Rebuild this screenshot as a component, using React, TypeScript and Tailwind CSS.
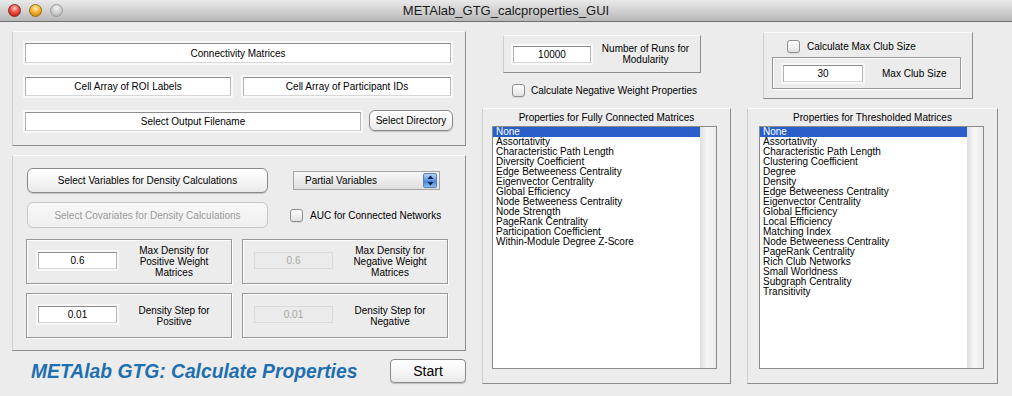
import React from "react";

const FONT = "font-['Liberation_Sans',Arial,Helvetica,sans-serif]";

const outerPanel =
  "border border-t-[#fafafa] border-l-[#cfcfcf] border-r-[#8c8c8c] border-b-[#8c8c8c]";
const subPanel =
  "border border-[#979797] shadow-[1px_1px_0_#ffffff,inset_1px_1px_0_#ffffff]";
const field =
  "bg-white border border-t-[#8e8e8e] border-l-[#b2b2b2] border-r-[#b8b8b8] border-b-[#d6d6d6] shadow-[0_0_0_2px_#f8f8f8]";
const disabledField =
  "bg-[#ebebeb] border border-[#dadada] text-[#a6a6a6]";
const roundBtn =
  "rounded-[6px] border border-[#8a8a8a] bg-[linear-gradient(#ffffff,#f6f6f6_50%,#e9e9e9)] shadow-[0_1px_1px_rgba(0,0,0,0.18)]";

function Checkbox() {
  return (
    <div className="w-[13px] h-[13px] shrink-0 rounded-[3px] border border-[#8e8e8e] bg-[linear-gradient(#ffffff,#e2e2e2)] shadow-[0_1px_0_rgba(0,0,0,0.08)]" />
  );
}

function ListBox({ items }: { items: string[] }) {
  return (
    <div className="w-[225px] h-[243px] border border-[#8a8a8a] bg-white flex">
      <div className="flex-1 text-[10px] leading-[10px] text-black">
        {items.map((it, i) => (
          <div
            key={it}
            className={
              "h-[10px] pl-[3px] whitespace-nowrap " +
              (i === 0 ? "bg-[#2a5fc9] text-white" : "")
            }
          >
            {it}
          </div>
        ))}
      </div>
      <div className="w-[16px] h-full bg-[linear-gradient(to_right,#dedede,#f6f6f6_45%,#ececec)]" />
    </div>
  );
}

const fullItems = [
  "None",
  "Assortativity",
  "Characteristic Path Length",
  "Diversity Coefficient",
  "Edge Betweeness Centrality",
  "Eigenvector Centrality",
  "Global Efficiency",
  "Node Betweeness Centrality",
  "Node Strength",
  "PageRank Centrality",
  "Participation Coefficient",
  "Within-Module Degree Z-Score",
];

const threshItems = [
  "None",
  "Assortativity",
  "Characteristic Path Length",
  "Clustering Coefficient",
  "Degree",
  "Density",
  "Edge Betweeness Centrality",
  "Eigenvector Centrality",
  "Global Efficiency",
  "Local Efficiency",
  "Matching Index",
  "Node Betweeness Centrality",
  "PageRank Centrality",
  "Rich Club Networks",
  "Small Worldness",
  "Subgraph Centrality",
  "Transitivity",
];

function DensityBox({
  value,
  lines,
  disabled,
}: {
  value: string;
  lines: string[];
  disabled?: boolean;
}) {
  return (
    <div className={"w-[206px] h-[45px] flex items-center " + subPanel}>
      <div
        className={
          "ml-[11px] w-[79px] h-[17px] flex items-center justify-center text-[10px] mb-[3px] " +
          (disabled ? disabledField : field)
        }
      >
        {value}
      </div>
      <div className="flex-1 text-center text-[10px] leading-[11px] text-black">
        {lines.map((l) => (
          <div key={l}>{l}</div>
        ))}
      </div>
    </div>
  );
}

function Stepper() {
  return (
    <div className="w-[14px] h-[15px] mr-[2px] rounded-[2px] bg-[linear-gradient(#b9d4f4,#5d98e0_50%,#3c7bd4_51%,#8cbaf0)] border border-[#5a7fb8] flex items-center justify-center">
      <svg width="7" height="11" viewBox="0 0 7 11">
        <path d="M3.5 0.5 L6.5 4 L0.5 4 Z" fill="#13244a" />
        <path d="M3.5 10.5 L6.5 7 L0.5 7 Z" fill="#13244a" />
      </svg>
    </div>
  );
}

export default function App() {
  return (
    <div
      className={
        "w-[1012px] h-[396px] bg-[#ececec] overflow-hidden flex flex-col text-black " +
        FONT
      }
    >
      {/* Title bar */}
      <div className="h-[22px] shrink-0 grid grid-cols-[1fr_auto_1fr] items-center bg-[linear-gradient(#e9e9e9,#cfcfcf_55%,#b7b7b7)] border-b border-[#6e6e6e]">
        <div className="flex items-center gap-[8px] pl-[8px]">
          <div className="w-[13px] h-[13px] rounded-full border border-[#8c2a22] bg-[radial-gradient(circle_at_50%_30%,#ffd0c8_0%,#f0584c_40%,#c62218_80%)]" />
          <div className="w-[13px] h-[13px] rounded-full border border-[#9a6a14] bg-[radial-gradient(circle_at_50%_30%,#fff0b8_0%,#f7bc3c_40%,#d88a10_80%)]" />
          <div className="w-[13px] h-[13px] rounded-full border border-[#9a9a9a] bg-[radial-gradient(circle_at_50%_30%,#f4f4f4_0%,#d2d2d2_45%,#b4b4b4_85%)]" />
        </div>
        <div className="text-[13px] leading-[16px] text-[#1a1a1a]">
          METAlab_GTG_calcproperties_GUI
        </div>
        <div />
      </div>

      <div className="flex flex-1 pl-[12px]">
        {/* Left column */}
        <div className="w-[454px] pt-[9px] flex flex-col">
          {/* Panel 1 */}
          <div className={"h-[115px] pt-[11px] pl-[12px] " + outerPanel}>
            <div
              className={
                "w-[426px] h-[20px] flex items-center justify-center text-[10px] " +
                field
              }
            >
              Connectivity Matrices
            </div>
            <div className="flex mt-[14px]">
              <div
                className={
                  "w-[206px] h-[19px] flex items-center justify-center text-[10px] " +
                  field
                }
              >
                Cell Array of ROI Labels
              </div>
              <div
                className={
                  "ml-[12px] w-[208px] h-[19px] flex items-center justify-center text-[10px] " +
                  field
                }
              >
                Cell Array of Participant IDs
              </div>
            </div>
            <div className="flex items-end mt-[14px]">
              <div
                className={
                  "w-[336px] h-[19px] flex items-center justify-center text-[10px] " +
                  field
                }
              >
                Select Output Filename
              </div>
              <div
                className={
                  "ml-[8px] w-[84px] h-[21px] flex items-center justify-center text-[10px] " +
                  roundBtn
                }
              >
                Select Directory
              </div>
            </div>
          </div>

          {/* Panel 2 */}
          <div className={"mt-[9px] h-[196px] pt-[12px] pl-[14px] " + outerPanel}>
            <div className="flex items-center h-[25px]">
              <div
                className={
                  "w-[241px] h-[25px] flex items-center justify-center text-[10px] " +
                  roundBtn
                }
              >
                Select Variables for Density Calculations
              </div>
              <div className="ml-[25px] w-[147px] h-[19px] flex items-center justify-between border border-[#a4a4a4] bg-[linear-gradient(#f8f8f8,#ececec_50%,#dedede)] text-[10px]">
                <span className="pl-[11px]">Partial Variables</span>
                <Stepper />
              </div>
            </div>
            <div className="flex items-center h-[26px] mt-[9px]">
              <div className="w-[241px] h-[26px] flex items-center justify-center text-[10px] text-[#9a9a9a] rounded-[6px] border border-[#c6c6c6] bg-[linear-gradient(#f8f8f8,#efefef)]">
                Select Covariates for Density Calculations
              </div>
              <div className="ml-[22px]">
                <Checkbox />
              </div>
              <span className="ml-[7px] text-[10px]">AUC for Connected Networks</span>
            </div>
            <div className="ml-[-1px] mt-[11px] flex gap-[10px]">
              <DensityBox
                value="0.6"
                lines={["Max Density for", "Positive Weight", "Matrices"]}
              />
              <DensityBox
                value="0.6"
                disabled
                lines={["Max Density for", "Negative Weight", "Matrices"]}
              />
            </div>
            <div className="ml-[-1px] mt-[9px] flex gap-[10px]">
              <DensityBox value="0.01" lines={["Density Step for", "Positive"]} />
              <DensityBox
                value="0.01"
                disabled
                lines={["Density Step for", "Negative"]}
              />
            </div>
          </div>

          {/* Bottom row */}
          <div className="mt-[8px] h-[24px] flex items-center justify-between">
            <span className="pl-[19px] text-[19.3px] font-bold italic text-[#1e6fb0] leading-[24px] pt-[2px]">
              METAlab GTG: Calculate Properties
            </span>
            <div className="w-[76px] h-[24px] flex items-center justify-center text-[14px] rounded-[4px] border border-[#8a8a8a] bg-[linear-gradient(#ffffff,#f6f6f6_50%,#e9e9e9)] shadow-[0_1px_1px_rgba(0,0,0,0.18)]">
              Start
            </div>
          </div>
        </div>

        {/* Middle column */}
        <div className="ml-[16px] w-[249px] flex flex-col">
          <div className={"ml-[21px] mt-[13px] w-[198px] h-[38px] flex items-center " + outerPanel}>
            <div
              className={
                "ml-[9px] w-[78px] h-[17px] flex items-center justify-center text-[10px] " +
                field
              }
            >
              10000
            </div>
            <div className="flex-1 text-center text-[10px] leading-[11px]">
              <div>Number of Runs for</div>
              <div>Modularity</div>
            </div>
          </div>
          <div className="ml-[30px] mt-[11px] h-[13px] flex items-center">
            <Checkbox />
            <span className="ml-[6px] text-[10px]">Calculate Negative Weight Properties</span>
          </div>
          <div className={"mt-[11px] h-[276px] " + outerPanel}>
            <div className="h-[17px] flex items-center justify-center text-[10px]">
              Properties for Fully Connected Matrices
            </div>
            <div className="ml-[9px]">
              <ListBox items={fullItems} />
            </div>
          </div>
        </div>

        {/* Right column */}
        <div className="ml-[16px] w-[251px] flex flex-col">
          <div className={"ml-[16px] mt-[10px] w-[210px] h-[67px] pt-[7px] " + outerPanel}>
            <div className="pl-[23px] h-[13px] flex items-center">
              <Checkbox />
              <span className="ml-[7px] text-[10px]">Calculate Max Club Size</span>
            </div>
            <div className={"ml-[8px] mt-[4px] w-[189px] h-[32px] flex items-center " + subPanel}>
              <div
                className={
                  "ml-[10px] w-[80px] h-[17px] flex items-center justify-center text-[10px] " +
                  field
                }
              >
                30
              </div>
              <span className="ml-[19px] text-[10px]">Max Club Size</span>
            </div>
          </div>
          <div className={"mt-[9px] h-[276px] " + outerPanel}>
            <div className="h-[17px] flex items-center justify-center text-[10px]">
              Properties for Thresholded Matrices
            </div>
            <div className="ml-[11px]">
              <ListBox items={threshItems} />
            </div>
          </div>
        </div>
      </div>
    </div>
  );
}
